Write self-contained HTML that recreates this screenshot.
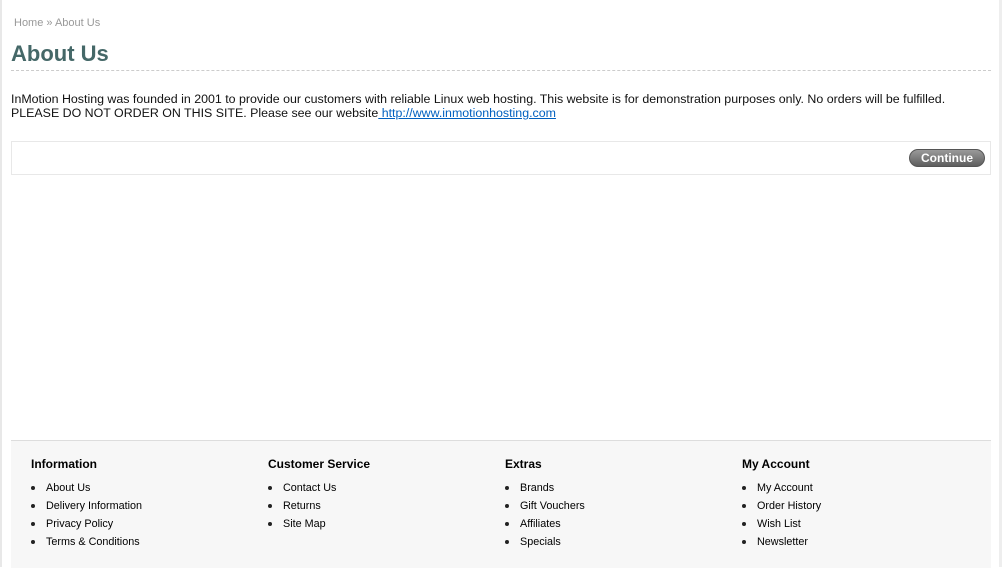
<!DOCTYPE html>
<html><head><meta charset="utf-8"><style>
body{margin:0;width:1002px;height:567px;overflow:hidden;background:#fff;font-family:"Liberation Sans",Arial,sans-serif;position:relative}
.lb{position:absolute;left:0;top:0;width:2px;height:567px;background:#e8e8e8}
.rb{position:absolute;left:999px;top:0;width:3px;height:567px;background:#eee}
.bc{position:absolute;left:14px;top:17px;font-size:11px;color:#999}
h1{position:absolute;left:11px;top:41px;margin:0;font-size:22px;color:#456868;font-weight:bold;width:980px;padding-bottom:3px;border-bottom:1px dashed #ccc;line-height:26px}
.txt{position:absolute;left:11px;top:92px;font-size:12.4px;color:#111;line-height:14px}
.txt a{color:#0060c0;text-decoration:underline}
.box{position:absolute;left:11px;top:141px;width:978px;height:32px;border:1px solid #e8e8e8}
.btn{position:absolute;right:5px;top:7px;width:76px;height:18px;border-radius:9px;background:linear-gradient(#9a9a9a,#5e5e5e);border:1px solid #555;color:#fff;font-weight:bold;font-size:12px;text-align:center;line-height:16px;box-sizing:border-box}
.ft{position:absolute;left:11px;top:440px;width:980px;height:127px;background:#f7f7f7;border-top:1px solid #ddd}
.col{position:absolute;top:16px}
.col h3{margin:0 0 8px;font-size:12px;color:#000;font-weight:bold}
.col ul{margin:0;padding:0;list-style:none}
.col li{font-size:10.8px;line-height:18px;color:#000;padding-left:15px;position:relative}
.col li:before{content:"";position:absolute;left:0;top:7px;width:4px;height:4px;border-radius:2px;background:#222}
</style></head><body>
<div class="lb"></div><div class="rb"></div>
<div class="bc">Home » About Us</div>
<h1>About Us</h1>
<div class="txt">InMotion Hosting was founded in 2001 to provide our customers with reliable Linux web hosting. This website is for demonstration purposes only. No orders will be fulfilled.<br>PLEASE DO NOT ORDER ON THIS SITE. Please see our website<a> http://www.inmotionhosting.com</a></div>
<div class="box"><div class="btn">Continue</div></div>
<div class="ft">
<div class="col" style="left:20px"><h3>Information</h3><ul><li>About Us</li><li>Delivery Information</li><li>Privacy Policy</li><li>Terms &amp; Conditions</li></ul></div>
<div class="col" style="left:257px"><h3>Customer Service</h3><ul><li>Contact Us</li><li>Returns</li><li>Site Map</li></ul></div>
<div class="col" style="left:494px"><h3>Extras</h3><ul><li>Brands</li><li>Gift Vouchers</li><li>Affiliates</li><li>Specials</li></ul></div>
<div class="col" style="left:731px"><h3>My Account</h3><ul><li>My Account</li><li>Order History</li><li>Wish List</li><li>Newsletter</li></ul></div>
</div>
</body></html>
